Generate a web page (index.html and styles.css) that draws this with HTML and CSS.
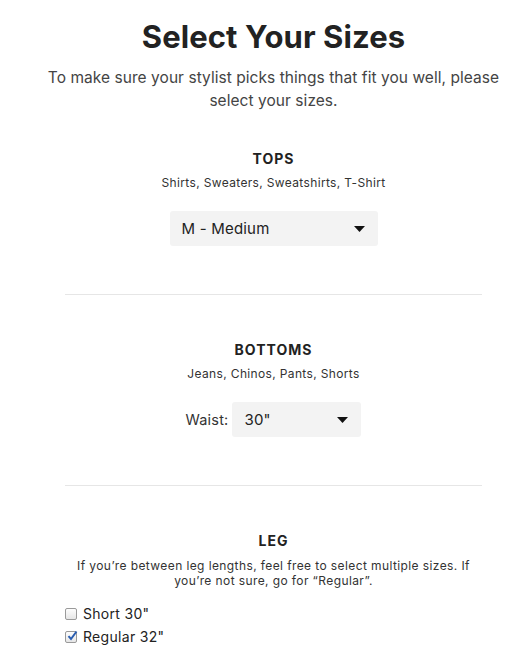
FILE: index.html
```html
<!DOCTYPE html>
<html>
<head>
<meta charset="utf-8">
<link rel="stylesheet" href="styles.css">
</head>
<body>
<main class="page">
  <h1 class="title">Select Your Sizes</h1>
  <p class="intro">To make sure your stylist picks things that fit you well, please select your sizes.</p>

  <section class="group">
    <h2 class="group-title">TOPS</h2>
    <p class="group-sub">Shirts, Sweaters, Sweatshirts, T-Shirt</p>
    <div class="field">
      <div class="select select-wide">
        <span>M - Medium</span>
        <svg class="caret" width="11" height="6" viewBox="0 0 11 6"><path d="M0 0H11L5.5 6Z" fill="#111"/></svg>
      </div>
    </div>
  </section>

  <section class="group">
    <h2 class="group-title">BOTTOMS</h2>
    <p class="group-sub">Jeans, Chinos, Pants, Shorts</p>
    <div class="field">
      <span class="field-label">Waist:</span>
      <div class="select select-narrow">
        <span>30"</span>
        <svg class="caret" width="11" height="6" viewBox="0 0 11 6"><path d="M0 0H11L5.5 6Z" fill="#111"/></svg>
      </div>
    </div>
  </section>

  <section class="group group-last">
    <h2 class="group-title">LEG</h2>
    <p class="group-sub group-sub-leg">If you’re between leg lengths, feel free to select multiple sizes. If you’re not sure, go for “Regular”.</p>
    <ul class="checks">
      <li class="check"><span class="box"></span>Short 30"</li>
      <li class="check"><span class="box box-on"><svg width="12" height="12" viewBox="0 0 12 12"><path d="M2.5 6.2L5 9L10.5 1.5" fill="none" stroke="#2a5db0" stroke-width="2"/></svg></span>Regular 32"</li>
    </ul>
  </section>
</main>
</body>
</html>
```

FILE: styles.css
```css
* { box-sizing: border-box; }
html, body { margin: 0; padding: 0; background: #fff; }
body {
  font-family: Inter, "Liberation Sans", sans-serif;
  color: #222;
}
.page {
  padding: 17px 0 0 18px;
}
.title {
  margin: 0;
  text-align: center;
  font-size: 31px;
  font-weight: 700;
  line-height: 40px;
  letter-spacing: 0.1px;
  color: #222;
}
.intro {
  margin: 9px auto 0;
  max-width: 472px;
  text-align: center;
  font-size: 15.5px;
  line-height: 23px;
  color: #444;
  letter-spacing: 0.05px;
}
.group {
  width: 417px;
  margin: 0 auto;
  border-bottom: 1px solid #e6e6e6;
  padding: 37px 0 48px;
  text-align: center;
}
.group + .group { padding-top: 45px; }
.group-last { border-bottom: none; padding-top: 45px !important; }
.group-title {
  margin: 0;
  font-size: 14px;
  font-weight: 700;
  letter-spacing: 1px;
  line-height: 20px;
  color: #222;
}
.group-sub {
  margin: 6px 0 0;
  font-size: 12px;
  line-height: 15px;
  color: #333;
  letter-spacing: 0.35px;
}
.group-sub-leg { margin-top: 7px; letter-spacing: 0.4px; }
.field {
  margin-top: 21px;
  display: flex;
  justify-content: center;
  align-items: center;
  gap: 4px;
}
.field-label {
  font-size: 14.5px;
  color: #333;
  letter-spacing: 0.2px;
}
.select {
  display: flex;
  align-items: center;
  justify-content: space-between;
  height: 35px;
  padding: 0 13px 0 12px;
  background: #f3f3f3;
  border-radius: 3px;
  font-size: 15px;
  color: #222;
  letter-spacing: 0.2px;
}
.select-wide { width: 208px; }
.select-narrow { width: 129px; }
.caret { display: block; }
.checks {
  list-style: none;
  margin: 14px 0 0;
  padding: 0;
  text-align: left;
}
.check {
  display: flex;
  align-items: center;
  gap: 6px;
  font-size: 14px;
  line-height: 23px;
  color: #222;
  letter-spacing: 0.3px;
}
.box {
  position: relative;
  width: 12px;
  height: 12px;
  border: 1px solid #9a9a9a;
  border-radius: 2px;
  background: linear-gradient(#fdfdfd, #e6e6e6);
  flex: none;
}
.box svg {
  position: absolute;
  left: 0;
  top: -2px;
}
```
